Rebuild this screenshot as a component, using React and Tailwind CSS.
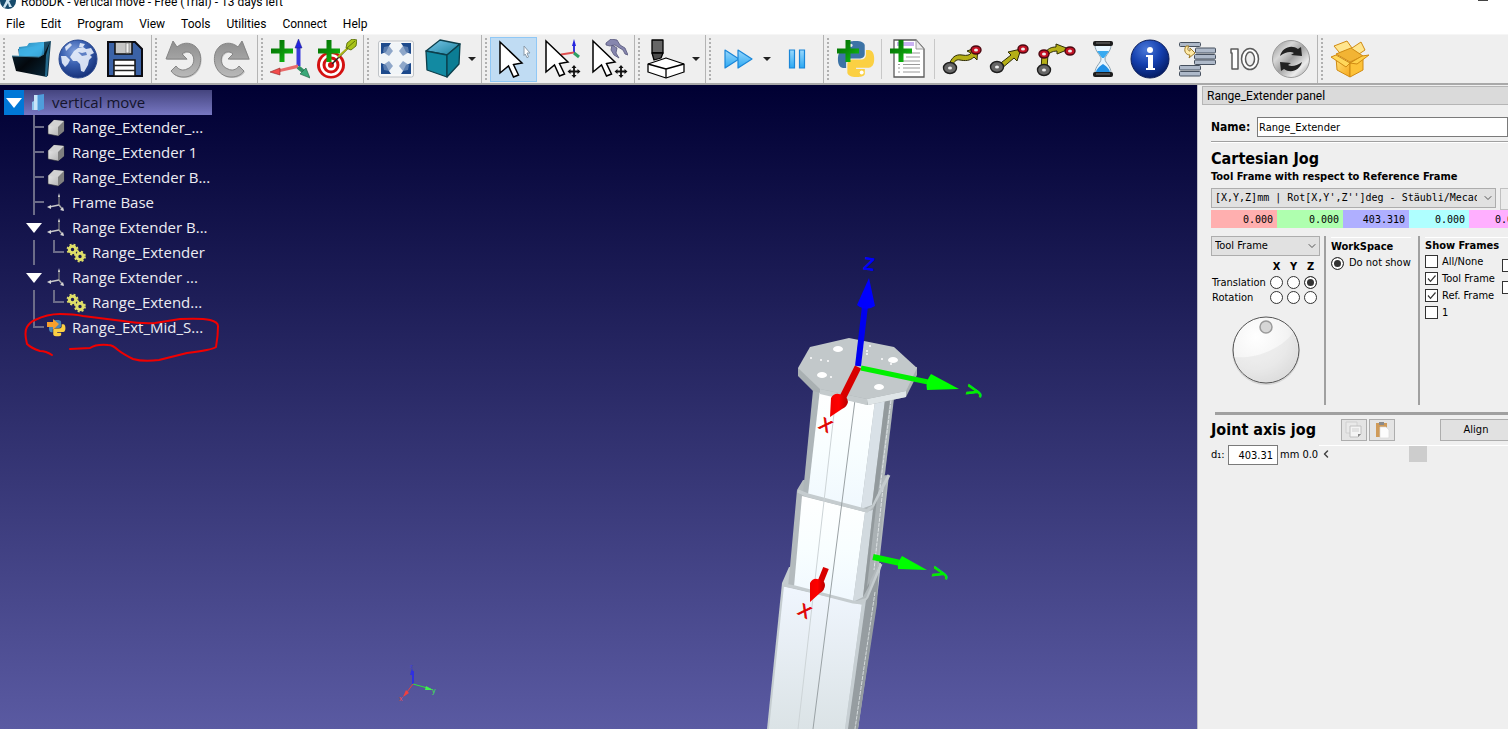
import React from "react";
import { ChevronDown, ChevronLeft } from "lucide-react";

const PY_BLUE =
  "M14.25.18l.9.2.73.26.59.3.45.32.34.34.25.34.16.33.1.3.04.26.02.2-.01.13V8.5l-.05.63-.13.55-.21.46-.26.38-.3.31-.33.25-.35.19-.35.14-.33.1-.3.07-.26.04-.21.02H8.77l-.69.05-.59.14-.5.22-.41.27-.33.32-.27.35-.2.36-.15.37-.1.35-.07.32-.04.27-.02.21v3.06H3.17l-.21-.03-.28-.07-.32-.12-.35-.18-.36-.26-.36-.36-.35-.46-.32-.59-.28-.73-.21-.88-.14-1.05-.05-1.23.06-1.22.16-1.04.24-.87.32-.71.36-.57.4-.44.42-.33.42-.24.4-.16.36-.1.32-.05.24-.01h.16l.06.01h8.16v-.83H6.18l-.01-2.75-.02-.37.05-.34.11-.31.17-.28.25-.26.31-.23.38-.2.44-.18.51-.15.58-.12.64-.1.71-.06.77-.04.84-.02 1.27.05zm-6.3 1.98l-.23.33-.08.41.08.41.23.34.33.22.41.09.41-.09.33-.22.23-.34.08-.41-.08-.41-.23-.33-.33-.22-.41-.09-.41.09z";
const PY_YELLOW =
  "M21.1 6.11l.28.06.32.12.35.18.36.27.36.35.35.47.32.59.28.73.21.88.14 1.04.05 1.23-.06 1.23-.16 1.04-.24.86-.32.71-.36.57-.4.45-.42.33-.42.24-.4.16-.36.09-.32.05-.24.02-.16-.01h-8.22v.82h5.84l.01 2.76.02.36-.05.34-.11.31-.17.29-.25.25-.31.24-.38.2-.44.17-.51.15-.58.13-.64.09-.71.07-.77.04-.84.01-1.27-.04-1.07-.14-.9-.2-.73-.25-.59-.3-.45-.33-.34-.34-.25-.34-.16-.33-.1-.3-.04-.25-.02-.2.01-.13v-5.34l.05-.64.13-.54.21-.46.26-.38.3-.32.33-.24.35-.2.35-.14.33-.1.3-.06.26-.04.21-.02.13-.01h5.84l.69-.05.59-.14.5-.21.41-.28.33-.32.27-.35.2-.36.15-.36.1-.35.07-.32.04-.28.02-.21V6.07h2.09l.14.01z";

/* ---------- toolbar drawings, all on a 40 x 40 grid ---------- */

function Icon({ children }) {
  return (
    <svg viewBox="0 0 40 40" className="size-10 shrink-0" aria-hidden="true">
      {children}
    </svg>
  );
}

function Plus({ x, y }) {
  return (
    <path
      d={`M${x + 8.5} ${y}h5v8.500h8.500v5h-8.500v8.500h-5v-8.500h-8.500v-5h8.500z`}
      fill="url(#plusGreen)"
    />
  );
}

function Defs() {
  return (
    <svg width="0" height="0" className="absolute" aria-hidden="true">
      <defs>
        <linearGradient id="plusGreen" x1="0" y1="0" x2="1" y2="1">
          <stop offset="0" stopColor="#006a00" />
          <stop offset="0.5" stopColor="#0a8f0a" />
          <stop offset="1" stopColor="#12c812" />
        </linearGradient>
        <linearGradient id="paperBlue" x1="0" y1="0" x2="1" y2="1">
          <stop offset="0" stopColor="#2b86b4" />
          <stop offset="0.6" stopColor="#43b6ea" />
          <stop offset="1" stopColor="#1a6a9a" />
        </linearGradient>
        <linearGradient id="folderFront" x1="0" y1="0" x2="1" y2="1">
          <stop offset="0" stopColor="#0b2b3c" />
          <stop offset="0.5" stopColor="#03080d" />
          <stop offset="1" stopColor="#082a3e" />
        </linearGradient>
        <linearGradient id="folderBack" x1="0" y1="0" x2="1" y2="1">
          <stop offset="0" stopColor="#2d7ca4" />
          <stop offset="1" stopColor="#0a1d2a" />
        </linearGradient>
        <radialGradient id="globe" cx="0.4" cy="0.3" r="0.75">
          <stop offset="0" stopColor="#7f9fdc" />
          <stop offset="0.45" stopColor="#3a60b0" />
          <stop offset="1" stopColor="#122c74" />
        </radialGradient>
        <radialGradient id="infoBlue" cx="0.4" cy="0.25" r="0.8">
          <stop offset="0" stopColor="#4a78d8" />
          <stop offset="0.5" stopColor="#143fae" />
          <stop offset="1" stopColor="#03185c" />
        </radialGradient>
        <linearGradient id="grayArrow" x1="0" y1="0" x2="0" y2="1">
          <stop offset="0" stopColor="#8e8e8e" />
          <stop offset="1" stopColor="#b9b9b9" />
        </linearGradient>
        <linearGradient id="skyBlue" x1="0" y1="0" x2="0" y2="1">
          <stop offset="0" stopColor="#9ad8fc" />
          <stop offset="1" stopColor="#2ba8f2" />
        </linearGradient>
        <linearGradient id="cubeTop" x1="0" y1="0" x2="1" y2="1">
          <stop offset="0" stopColor="#7cc8ea" />
          <stop offset="1" stopColor="#17819c" />
        </linearGradient>
        <linearGradient id="steel" x1="0" y1="0" x2="1" y2="1">
          <stop offset="0" stopColor="#8a8a8a" />
          <stop offset="0.3" stopColor="#d8d8d8" />
          <stop offset="0.5" stopColor="#a2a2a2" />
          <stop offset="0.75" stopColor="#ececec" />
          <stop offset="1" stopColor="#8a8a8a" />
        </linearGradient>
        <linearGradient id="boxGold" x1="0" y1="0" x2="1" y2="1">
          <stop offset="0" stopColor="#ffe27a" />
          <stop offset="1" stopColor="#f7a81b" />
        </linearGradient>
        <linearGradient id="stone" x1="0" y1="0" x2="1" y2="1">
          <stop offset="0" stopColor="#f2f2f2" />
          <stop offset="1" stopColor="#a8a8a8" />
        </linearGradient>
        <radialGradient id="dialFace" cx="0.35" cy="0.3" r="0.8">
          <stop offset="0" stopColor="#ffffff" />
          <stop offset="0.6" stopColor="#f3f3f3" />
          <stop offset="1" stopColor="#dcdcdc" />
        </radialGradient>
        <linearGradient id="whiteMetal" x1="0" y1="0" x2="0" y2="1">
          <stop offset="0" stopColor="#ffffff" />
          <stop offset="0.5" stopColor="#f8feff" />
          <stop offset="1" stopColor="#f0f8fe" />
        </linearGradient>
        <linearGradient id="baseMetal" x1="0" y1="0" x2="0" y2="1">
          <stop offset="0" stopColor="#f0f6fe" />
          <stop offset="1" stopColor="#dbe3e6" />
        </linearGradient>
        <linearGradient id="redCone" x1="0" y1="0" x2="1" y2="0">
          <stop offset="0" stopColor="#f00000" />
          <stop offset="0.5" stopColor="#ff0000" />
          <stop offset="1" stopColor="#b80000" />
        </linearGradient>
      </defs>
    </svg>
  );
}

const FolderIcon = () => (
  <Icon>
    <path d="M7 10l9-2 2-3 22-3-3 35-27-8z" fill="url(#folderBack)" />
    <path d="M8 8l8-1 2-3 15-1v15H8z" fill="url(#paperBlue)" />
    <path d="M8 10l24-4-2 13H8z" fill="#3fb0e4" opacity="0.8" />
    <path d="M1 17l27 1 5-3 6-12-3 35L5 32z" fill="url(#folderFront)" />
    <path d="M39 3l-4 13-1 21 2 1z" fill="#3189b5" opacity="0.7" />
    <path d="M1 17l27 1 5-3" fill="none" stroke="#3c7f9e" strokeWidth="1" />
  </Icon>
);

const GlobeIcon = () => (
  <Icon>
    <circle cx="20" cy="20" r="19" fill="url(#globe)" stroke="#27468e" strokeWidth="1" />
    <path
      d="M16 12l4-3 5-1 3 2 5-1 3 5-4 2 2 2-3 3-1 5-4 7-3-1-1-7-3-3-4 0-3-4zM3 17l5 0 4 4-2 4-3 3-3-4zM22 4l5 1-2 3-4 0zM7 8l5-4 2 2-6 6z"
      fill="#e8eefb"
      opacity="0.9"
    />
    <path d="M20 13l4 1 4-1 1 3-5 1z" fill="#5e7fc4" />
  </Icon>
);

const SaveIcon = () => (
  <Icon>
    <path d="M3 3h27l7 7v27H3z" fill="#3b62a6" stroke="#0b0b12" strokeWidth="2" />
    <path d="M10 3h17v12H10z" fill="#c5c5c5" stroke="#111" strokeWidth="1.5" />
    <path d="M21 4h3v10h-3z" fill="#efefef" stroke="#777" strokeWidth="0.7" />
    <path d="M9 21h21v16H9z" fill="#fff" stroke="#111" strokeWidth="1.5" />
    <path d="M9 26.500h21M9 31.500h21" stroke="#222" strokeWidth="1.5" />
  </Icon>
);

const UndoPath =
  "M9 2l4 6C21 1 33 4 36 15c3 12-5 23-16 23-6 0-10-2-13-6l5-5c3 4 7 5 11 3 6-2 8-8 6-13-2-4-7-6-11-2l5 5L2 20z";

const UndoIcon = () => (
  <Icon>
    <path d={UndoPath} fill="#c4c4c4" transform="translate(1 1)" />
    <path d={UndoPath} fill="url(#grayArrow)" stroke="#858585" strokeWidth="1" />
  </Icon>
);

const RedoIcon = () => (
  <Icon>
    <g transform="translate(40 0) scale(-1 1)">
      <path d={UndoPath} fill="#c4c4c4" transform="translate(-1 1)" />
      <path d={UndoPath} fill="url(#grayArrow)" stroke="#858585" strokeWidth="1" />
    </g>
  </Icon>
);

const Axes = () => (
  <>
    <path d="M26.500 8h4v19h-4z" fill="#3a3adc" />
    <path d="M28.500 0l3.500 9h-7z" fill="#2424e0" stroke="#1c1c80" strokeWidth="0.5" />
    <path d="M10 30l18-4.500v3.500l-18 4z" fill="#e86a6a" />
    <path d="M0 33l10-4v7z" fill="#f34b4b" stroke="#8c2222" strokeWidth="0.6" />
    <path d="M28 28l6 5" stroke="#2f8f62" strokeWidth="4" />
    <path d="M30 35l6-6 4 10z" fill="#3aa878" stroke="#1c5c40" strokeWidth="0.6" />
  </>
);

const AddFrameIcon = () => (
  <Icon>
    <Axes />
    <Plus x={1} y={1} />
  </Icon>
);

const AddTargetIcon = () => (
  <Icon>
    <ellipse cx="14" cy="26" rx="14" ry="13.500" fill="#d41111" />
    <circle cx="14" cy="26" r="11" fill="#fff" />
    <circle cx="14" cy="26" r="8.500" fill="#d41111" />
    <circle cx="14" cy="26" r="5.500" fill="#fff" />
    <circle cx="14" cy="26" r="3" fill="#d41111" />
    <path d="M15 25L33 7" stroke="#222" strokeWidth="1.5" />
    <path d="M21 18L33 7" stroke="#a9b41a" strokeWidth="2" />
    <path d="M29 9l1-5 5-4 5 1-1 6-5 4z" fill="#a9c41a" stroke="#4c6200" strokeWidth="0.8" />
    <path d="M30 9l8-7" stroke="#4c6200" strokeWidth="0.8" />
    <Plus x={1} y={1} />
  </Icon>
);

const FitIcon = () => (
  <Icon>
    <rect x="2.500" y="2" width="35" height="36" rx="2" fill="#f6f7f8" stroke="#c0c4c8" />
    <rect x="5" y="4" width="30" height="31" fill="#f1f5f8" />
    <g fill="#1d4a8c">
      <path d="M5 4h10l-2 3-3 6-5 2z" />
      <path d="M35 4H25l2 3 3 6 5 2z" />
      <path d="M5 35h10l-2-3-3-6-5-2z" />
      <path d="M35 35H25l2-3 3-6 5-2z" />
    </g>
    <g fill="#6d8dba" opacity="0.75">
      <path d="M8 8l5-1 4 5-4 5-6-4z" />
      <path d="M32 8l-5-1-4 5 4 5 6-4z" />
      <path d="M8 31l5 1 4-5-4-5-6 4z" />
      <path d="M32 31l-5 1-4-5 4-5 6 4z" />
    </g>
  </Icon>
);

const CubeIcon = () => (
  <Icon>
    <g stroke="#0c3f4c" strokeWidth="1.300" strokeLinejoin="round">
      <path d="M3 12L17 1l20 4-13 11z" fill="url(#cubeTop)" />
      <path d="M3 12l21 4v22L4 31z" fill="#128aa2" />
      <path d="M24 16L37 5l-1 20-12 13z" fill="#0b7d94" />
    </g>
  </Icon>
);

const CURSOR = "M6 3l22 21-8.500 1.500 5 10.500-5 2-5-11-8.500 7z";

const SelectIcon = () => (
  <Icon>
    <path d={CURSOR} fill="#fff" stroke="#000" strokeWidth="1.500" />
    <path d="M30 7l6 7h-3l1.500 4-1.500.8-1.800-3.800-1.200 1.500z" fill="#fff" stroke="#8a9aa8" strokeWidth="1" />
  </Icon>
);

const MoveCross = () => (
  <g stroke="#111" strokeWidth="1.800" fill="#111">
    <path d="M33 28v9M28 32.500h10" />
    <path d="M33 26l2.500 3h-5zM33 39l2.500-3h-5zM26.500 32.500l3-2.500v5zM39.500 32.500l-3-2.500v5z" stroke="none" />
  </g>
);

const MoveFrameIcon = () => (
  <Icon>
    <path d="M33 14V5" stroke="#3434d8" strokeWidth="2" />
    <path d="M33 0l2 7h-4z" fill="#2424e0" />
    <path d="M33 13.500l-13 2" stroke="#e05050" strokeWidth="2" />
    <path d="M33 14l5 4" stroke="#2f9f62" strokeWidth="3" />
    <path d={CURSOR} fill="#fff" stroke="#000" strokeWidth="1.500" transform="translate(-1 -1)" />
    <MoveCross />
  </Icon>
);

const MoveToolIcon = () => (
  <Icon>
    <g fill="#8686ae" stroke="#55557a" strokeWidth="0.8">
      <path d="M18 4l5-4 6 1 3 5 5 3 3 7-3-1-2-4-5-3-3-2-5 1-4-1z" />
      <path d="M24 6l5 3-1 5 3 5-5-3-3-5z" />
    </g>
    <path d={CURSOR} fill="#fff" stroke="#000" strokeWidth="1.500" transform="translate(-1 -1)" />
    <MoveCross />
  </Icon>
);

const MillIcon = () => (
  <Icon>
    <g stroke="#000" strokeWidth="1.300" strokeLinejoin="round">
      <path d="M1 25l18-6 18 6v8l-18 6-18-6z" fill="#fff" />
      <path d="M1 25l18 5 18-5M19 30v9" fill="none" />
      <path d="M5 1h11v13H5z" fill="#666" />
      <path d="M5 14h11l-2 5-7 2z" fill="#4c4c4c" />
    </g>
  </Icon>
);

const FastIcon = () => (
  <Icon>
    <g fill="url(#skyBlue)" stroke="#1a86d8" strokeWidth="1.200" strokeLinejoin="round">
      <path d="M7 11l14 9-14 9z" />
      <path d="M20 11l14 9-14 9z" />
    </g>
  </Icon>
);

const PauseIcon = () => (
  <Icon>
    <g fill="url(#skyBlue)" stroke="#1a86d8" strokeWidth="1.200">
      <path d="M12.500 11h5v18h-5zM22.500 11h5v18h-5z" />
    </g>
  </Icon>
);

const AddPythonIcon = () => (
  <Icon>
    <g transform="translate(2 2) scale(1.500)">
      <path d={PY_BLUE} fill="#3c73a6" />
      <path d={PY_YELLOW} fill="#fbd043" />
      <circle cx="15.800" cy="21" r="1.300" fill="#fff" />
    </g>
    <Plus x={1} y={1} />
  </Icon>
);

const AddProgramIcon = () => (
  <Icon>
    <path d="M5 1h22l8 9v28H5z" fill="#fff" stroke="#5a5a5a" strokeWidth="1.300" />
    <path d="M27 1v9h8z" fill="#ececec" stroke="#888" strokeWidth="0.8" />
    <path d="M8 3h17v4H8z" fill="#c9b2f2" />
    <path
      d="M17 14h14M17 18h14M14 22h17M14 25.500h17M14 29h17M14 33h17M9 25.500h2M9 29h2M9 33h2"
      stroke="#9a9a9a"
      strokeWidth="1.200"
    />
    <Plus x={1} y={1} />
  </Icon>
);

const Node = ({ x, y, red }) => (
  <>
    <ellipse cx={x} cy={y} rx={red ? 5 : 6.500} ry={red ? 4 : 5.500} fill={red ? "#c31224" : "#666"} stroke={red ? "#4c0710" : "#1d1d1d"} strokeWidth="1.400" />
    <ellipse cx={x} cy={y} rx="2" ry="1.500" fill="#eee" />
  </>
);

const MoveJIcon = () => (
  <Icon>
    <path d="M7 27c2-9 7-12 13-11 5 1 8 0 9-2l-4-2 11-4-1 13-3-3c-4 4-9 4-14 3-4-1-7 2-7 7z" fill="#b5af16" stroke="#2e2c05" strokeWidth="1" />
    <Node x={34} y={11} red />
    <Node x={8} y={29} />
  </Icon>
);

const MoveLIcon = () => (
  <Icon>
    <path d="M8 27l14-11-3-3 13-3-4 12-3-3-13 11z" fill="#b5af16" stroke="#2e2c05" strokeWidth="1" />
    <Node x={34} y={10} red />
    <Node x={8} y={28} />
  </Icon>
);

const MoveCIcon = () => (
  <Icon>
    <path d="M5 31l1-16h6l-1 15z" fill="#b5af16" stroke="#2e2c05" strokeWidth="1" />
    <path d="M8 16c3-7 8-8 12-8V5l13 5-12 5v-3c-5 0-8 2-10 5z" fill="#b5af16" stroke="#2e2c05" strokeWidth="1" />
    <Node x={34} y={12} red />
    <Node x={8} y={15} red />
    <Node x={8} y={31} />
  </Icon>
);

const HourglassIcon = () => (
  <Icon>
    <path d="M12 6h16c0 7-6 10-6 14s6 7 6 14H12c0-7 6-10 6-14s-6-7-6-14z" fill="#e8f6ff" stroke="#8ba0ae" strokeWidth="1" />
    <path d="M14 12h12l-5 7h-2z" fill="#38aaf0" />
    <path d="M20 25c4 3 7 5 7 9H13c0-4 3-6 7-9z" fill="#2090e6" />
    <rect x="10" y="2" width="20" height="5" rx="2" fill="#1c1c1c" />
    <rect x="10" y="33" width="20" height="5" rx="2" fill="#1c1c1c" />
    <path d="M13 4h14M13 35h14" stroke="#777" strokeWidth="1" />
  </Icon>
);

const InfoIcon = () => (
  <Icon>
    <circle cx="20" cy="20" r="19" fill="url(#infoBlue)" stroke="#0a1c58" strokeWidth="1" />
    <circle cx="20" cy="11" r="3" fill="#fff" />
    <path d="M16 16h7v13h2v2h-9v-2h2V18h-2z" fill="#fff" />
  </Icon>
);

const CallIcon = () => (
  <Icon>
    <g fill="#aeb9c9" stroke="#46505e" strokeWidth="1">
      <rect x="2.500" y="3.500" width="21" height="4" rx="1" />
      <rect x="18.500" y="9" width="20" height="5" rx="1" />
      <rect x="17.500" y="15.500" width="21" height="4.500" rx="1" />
      <rect x="17.500" y="21" width="21" height="4.500" rx="1" />
      <rect x="2.500" y="26.500" width="21" height="4.500" rx="1" />
      <rect x="2.500" y="32.500" width="21" height="4.500" rx="1" />
    </g>
    <path d="M9 7c-3 5 0 9 4 9l-1 3 6-5-5-5v3c-2 0-3-2-1-5z" fill="#ffeaa6" stroke="#9c7a28" strokeWidth="1" />
  </Icon>
);

const IoIcon = () => (
  <Icon>
    <g stroke="#5c5c5c" strokeWidth="1.500" strokeLinejoin="round">
      <path d="M7 10h7v20H8V14H7z" fill="#fff" />
      <ellipse cx="26" cy="20" rx="8.500" ry="10.500" fill="#fff" />
      <ellipse cx="26" cy="20" rx="4.500" ry="7" fill="#efefef" />
    </g>
  </Icon>
);

const SyncIcon = () => (
  <Icon>
    <circle cx="20" cy="20" r="18.500" fill="url(#steel)" stroke="#9a9a9a" strokeWidth="1" />
    <path d="M9 17c2-8 11-12 18-7l3-2 1 9-11-1 3-2c-3-2-9-1-14 3z" fill="#222" />
    <path d="M31 23c-2 8-11 12-18 7l-3 2-1-9 11 1-3 2c3 2 9 1 14-3z" fill="#222" />
  </Icon>
);

const PackageIcon = () => (
  <Icon>
    <g stroke="#d08a12" strokeWidth="1" strokeLinejoin="round">
      <path d="M4 7l13-5 5 7 9-6 4 8-12 8H14z" fill="#ffe58e" />
      <path d="M6 15l15-6 12 8-13 6z" fill="#f2b434" />
      <path d="M6 18l14 6v14L7 31z" fill="url(#boxGold)" />
      <path d="M20 24l13-6v13l-13 7z" fill="#fdc238" />
      <path d="M6 16l14 8-4 4-15-10z" fill="#ffd75a" />
      <path d="M20 24l12-7 7-1-12 9z" fill="#ffcf48" />
    </g>
  </Icon>
);

/* ---------- toolbar ---------- */

function ToolButton({ label, active, children }) {
  return (
    <button
      type="button"
      aria-label={label}
      className={
        active
          ? "flex h-[45px] w-[47px] items-center justify-center border border-[#90c8f6] bg-[#c0dcf3]"
          : "flex h-[45px] w-[47px] items-center justify-center border border-transparent"
      }
    >
      {children}
    </button>
  );
}

function Arrow({ label }) {
  return (
    <button type="button" aria-label={label} className="flex h-11 w-3 items-center justify-center">
      <svg viewBox="0 0 8 4" className="h-1 w-2">
        <path d="M0 0h8L4 4z" fill="#222" />
      </svg>
    </button>
  );
}

function Group({ first, last, children }) {
  return (
    <div
      className={
        "flex shrink-0 items-center pr-[3px] " + (last ? "" : "border-r border-[#b4b4b4]")
      }
    >
      <div className={"flex h-11 justify-center " + (first ? "w-[7px]" : "w-2")}>
        <svg viewBox="0 0 2 44" className="h-11 w-0.5" aria-hidden="true">
          <path d="M1 1v43" stroke="#b0b0b0" strokeWidth="2" strokeDasharray="2 2" />
        </svg>
      </div>
      {children}
    </div>
  );
}

const Divider = () => <div className="mx-[2px] h-10 w-0.5 border-l border-[#c8c8c8]" />;

function Toolbar() {
  return (
    <div className="flex h-[51px] shrink-0 overflow-hidden border-t border-b-2 border-t-[#f6f6f6] border-b-[#a9a9a9] bg-[#efefef]">
      <Group first>
        <ToolButton label="Open"><FolderIcon /></ToolButton>
        <ToolButton label="Online library"><GlobeIcon /></ToolButton>
        <ToolButton label="Save"><SaveIcon /></ToolButton>
      </Group>
      <Group>
        <ToolButton label="Undo"><UndoIcon /></ToolButton>
        <ToolButton label="Redo"><RedoIcon /></ToolButton>
      </Group>
      <Group>
        <ToolButton label="Add reference frame"><AddFrameIcon /></ToolButton>
        <ToolButton label="Add target"><AddTargetIcon /></ToolButton>
      </Group>
      <Group>
        <ToolButton label="Fit all"><FitIcon /></ToolButton>
        <ToolButton label="Isometric view"><CubeIcon /></ToolButton>
        <Arrow label="More views" />
      </Group>
      <Group>
        <ToolButton label="Select" active><SelectIcon /></ToolButton>
        <ToolButton label="Move reference frame"><MoveFrameIcon /></ToolButton>
        <ToolButton label="Move tool"><MoveToolIcon /></ToolButton>
      </Group>
      <Group>
        <ToolButton label="Machining"><MillIcon /></ToolButton>
        <Arrow label="More machining" />
      </Group>
      <Group>
        <ToolButton label="Fast simulation"><FastIcon /></ToolButton>
        <Arrow label="Simulation speed" />
        <ToolButton label="Pause"><PauseIcon /></ToolButton>
      </Group>
      <Group>
        <ToolButton label="Add Python program"><AddPythonIcon /></ToolButton>
        <Divider />
        <ToolButton label="Add program"><AddProgramIcon /></ToolButton>
        <Divider />
        <ToolButton label="Move joint"><MoveJIcon /></ToolButton>
        <ToolButton label="Move linear"><MoveLIcon /></ToolButton>
        <ToolButton label="Move circular"><MoveCIcon /></ToolButton>
        <ToolButton label="Pause instruction"><HourglassIcon /></ToolButton>
        <ToolButton label="Show message"><InfoIcon /></ToolButton>
        <ToolButton label="Program call"><CallIcon /></ToolButton>
        <ToolButton label="Set or wait input output"><IoIcon /></ToolButton>
        <ToolButton label="Simulation event"><SyncIcon /></ToolButton>
      </Group>
      <Group last>
        <ToolButton label="Export package"><PackageIcon /></ToolButton>
      </Group>
    </div>
  );
}

/* ---------- station tree ---------- */

const StationGlyph = () => (
  <svg viewBox="0 0 20 20" className="size-5" aria-hidden="true">
    <path d="M6 2l7 0v15l-9 0v-8l2-1z" fill="#8cc4ee" />
    <path d="M10 2l6-1v15l-6 2z" fill="#4f9ddb" />
    <path d="M6 2h3v15H6z" fill="#c8e4f8" />
  </svg>
);

const ObjectGlyph = () => (
  <svg viewBox="0 0 20 20" className="size-5" aria-hidden="true">
    <path d="M2 8l6-6 10 1v10l-6 5-10-2z" fill="url(#stone)" stroke="#2c2c34" strokeWidth="0.600" />
    <path d="M2 8l6-6 10 1-6 6z" fill="#d2d2d2" />
    <path d="M12 9l6-6v10l-6 5z" fill="#808080" />
  </svg>
);

const FrameGlyph = () => (
  <svg viewBox="0 0 20 20" className="size-5" aria-hidden="true">
    <g fill="none" strokeWidth="1.500">
      <path d="M13 2v10" stroke="#6c6c74" />
      <path d="M13 12L3 14" stroke="#c8c8c8" />
      <path d="M13 12l4 5" stroke="#a8a8a8" />
    </g>
    <path d="M1 14l4-2v4zM18 18l-4-1 3-3zM13 0l1 4h-2z" fill="#d5d5d5" />
  </svg>
);

const MechanismGlyph = () => (
  <svg viewBox="0 0 20 20" className="size-5" aria-hidden="true">
    <g fill="none" stroke="#dfdf68">
      <circle cx="6.500" cy="6.500" r="3.200" strokeWidth="3" />
      <circle cx="6.500" cy="6.500" r="5" strokeWidth="1.800" strokeDasharray="2 2" />
      <circle cx="14" cy="13.500" r="3.200" strokeWidth="3" />
      <circle cx="14" cy="13.500" r="5" strokeWidth="1.800" strokeDasharray="2 2" />
    </g>
  </svg>
);

const ScriptGlyph = () => (
  <svg viewBox="0 0 20 20" className="size-5" aria-hidden="true">
    <g transform="translate(3 2) scale(0.680)">
      <path d={PY_BLUE} fill="#4a84b4" />
      <path d={PY_YELLOW} fill="#fbd043" />
    </g>
    <path d="M1 4h6V1l6 5-6 6V9H1z" fill="#f7a02c" />
  </svg>
);

const Triangle = () => (
  <svg viewBox="0 0 16 10" className="h-[10px] w-4" aria-hidden="true">
    <path d="M0 0h16L8 10z" fill="#fff" />
  </svg>
);

/* A 20 x 25 cell of branch lines: kind is tee, elbow or bar */
function Branch({ kind }) {
  const d = {
    tee: "M10 0v25M10 12h10",
    elbow: "M10 0v12h10",
    bar: "M10 0v25",
  }[kind];
  return (
    <svg viewBox="0 0 20 25" className="h-[25px] w-5 shrink-0" aria-hidden="true">
      <path d={d} fill="none" stroke="#6c6c88" strokeWidth="2" />
    </svg>
  );
}

const ROWS = [
  { lead: ["tee"], glyph: ObjectGlyph, text: "Range_Extender_..." },
  { lead: ["tee"], glyph: ObjectGlyph, text: "Range_Extender 1" },
  { lead: ["tee"], glyph: ObjectGlyph, text: "Range_Extender B..." },
  { lead: ["tee"], glyph: FrameGlyph, text: "Frame Base" },
  { lead: ["open"], glyph: FrameGlyph, text: "Range Extender B..." },
  { lead: ["bar", "elbow"], glyph: MechanismGlyph, text: "Range_Extender" },
  { lead: ["open"], glyph: FrameGlyph, text: "Range Extender ..." },
  { lead: ["bar", "elbow"], glyph: MechanismGlyph, text: "Range_Extend..." },
  { lead: ["elbow"], glyph: ScriptGlyph, text: "Range_Ext_Mid_S..." },
];

function Tree() {
  return (
    <ul className="relative w-[212px] pt-[5px] pl-1 font-['Open_Sans','Noto_Sans',sans-serif] text-[15px] leading-[25px] text-[#ececf2]">
      <li className="flex items-center bg-linear-to-b/srgb from-[#44447e] to-[#7777c2] text-[#14142c]">
        <button type="button" aria-label="Collapse station" className="flex h-[25px] w-5 items-center justify-center bg-[#0078d7]">
          <Triangle />
        </button>
        <span className="flex w-7 justify-center pr-px"><StationGlyph /></span>
        <span>vertical move</span>
      </li>
      {ROWS.map(({ lead, glyph: Glyph, text }, i) => (
        <li key={i} className="flex h-[25px] items-center pl-5">
          {lead.map((kind, j) =>
            kind === "open" ? (
              <button key={j} type="button" aria-label={"Collapse " + text} className="flex h-[25px] w-5 items-center justify-center">
                <Triangle />
              </button>
            ) : (
              <Branch key={j} kind={kind} />
            )
          )}
          <span className="flex w-7 shrink-0 pl-0.5"><Glyph /></span>
          <span className="whitespace-nowrap">{text}</span>
        </li>
      ))}
    </ul>
  );
}

/* ---------- 3D view ---------- */

function Scene() {
  return (
    <svg
      viewBox="0 85 1197 644"
      preserveAspectRatio="xMidYMax slice"
      className="absolute inset-0 h-full w-full font-['Liberation_Sans',sans-serif]"
      role="img"
      aria-label="Three stage telescopic column"
    >
      {/* base stage */}
      <path d="M782 583l7-16 92-4-3 27-20 139h-91z" fill="#c5cdd0" />
      <path d="M784 586l78 17-17 126h-76z" fill="url(#baseMetal)" />
      <path d="M862 603l4-6-16 132h-5z" fill="#c7cfd3" />
      <path d="M866 600l13-36-2 40-19 125h-10z" fill="#969da1" />
      <path d="M875 592l-20 137" stroke="#d4dadc" strokeWidth="1" strokeDasharray="4 1" />
      <path d="M784 585l78 18 5-6 14-33" fill="none" stroke="#c5cccf" strokeWidth="3" />

      {/* middle stage */}
      <path d="M797 490l6-10 86-5-10 90-13 33-13 4-65-15 2-20z" fill="#b3babd" />
      <path d="M802 496l63 16-12 90-59-15z" fill="url(#whiteMetal)" />
      <path d="M865 512l8-2-10 87-10 5z" fill="#d2dadf" />
      <path d="M873 510l7-20-11 96-6 11z" fill="#92999c" />
      <path d="M887 480l-10 87-10 20 11-97z" fill="#aab1b4" />
      <path d="M883 488l-9 82" stroke="#dde2e4" strokeWidth="1" strokeDasharray="4 1" />
      <path d="M784 585l11 2 58 15 9 1" fill="none" stroke="#c5cccf" strokeWidth="3" />
      <path d="M798 491l8 4 61 16 6-6 16-30" fill="none" stroke="#c5cccf" strokeWidth="3" />

      {/* top stage */}
      <path d="M813 390h82l-10 84-13 32-11 3-58-16z" fill="#aeb6b9" />
      <path d="M820 389l55 12-14 108-53-14z" fill="url(#whiteMetal)" />
      <path d="M875 401l10-1-13 105-11 4z" fill="#d9e1e7" />
      <path d="M885 400l5 0-12 93-6 12z" fill="#939a9d" />
      <path d="M891 400l-11 88" stroke="#dde2e4" strokeWidth="1" strokeDasharray="4 1" />
      <path d="M798 491l10 4 53 14 6 2" fill="none" stroke="#c5cccf" strokeWidth="3" />

      {/* seams */}
      <path d="M855 400L813 729" stroke="#9aa2a5" strokeWidth="1" />
      <path d="M836 396l-38 333" stroke="#cdd4d7" strokeWidth="1" />

      {/* flange */}
      <path d="M798 368v8l15 15 55 14 38-8 11-22v-8z" fill="#a9b0b2" />
      <path d="M820 389l47 10v6l-47-11z" fill="#c5cbcd" />
      <path d="M867 399l39-8v6l-38 8z" fill="#dfe5e7" />
      <path d="M810 347l39-9 45 9 23 21-11 23-39 8-47-10-22-21z" fill="#c2c8ca" />
      <g fill="#fff">
        <ellipse cx="838" cy="349" rx="5" ry="3" />
        <ellipse cx="893" cy="360" rx="5" ry="3" />
        <ellipse cx="822" cy="375" rx="5" ry="3" />
        <ellipse cx="879" cy="387" rx="5" ry="3" />
        <circle cx="811" cy="358" r="1" />
        <circle cx="821" cy="360" r="1" />
        <circle cx="828" cy="361" r="1" />
        <circle cx="870" cy="346" r="1" />
        <circle cx="867" cy="351" r="1" />
        <circle cx="867" cy="354" r="1" />
        <circle cx="831" cy="377" r="1" />
        <circle cx="882" cy="359" r="1" />
        <circle cx="891" cy="364" r="1" />
      </g>

      {/* tool frame */}
      <path d="M858 366l7-60" stroke="#0000f0" strokeWidth="6" />
      <path d="M869 278l6 28q-9 6-18-1z" fill="#0000ff" />
      <path d="M861 368l67 14" stroke="#00f000" strokeWidth="5" />
      <path d="M959 389l-28-15q-6 8-4 16z" fill="#00ff00" />
      <path d="M858 367l-17 34" stroke="#d80000" strokeWidth="7" />
      <path d="M830 417l1-19q3-5 8-4 9 2 9 8-1 5-6 7z" fill="url(#redCone)" />
      <text x="864" y="270" fontSize="17" fill="#0000ff" stroke="#0000ff" strokeWidth="0.800" transform="rotate(8 870 264)">Z</text>
      <text x="820" y="431" fontSize="17" fill="#e00000" stroke="#e00000" strokeWidth="0.800" transform="rotate(28 826 425)">X</text>
      <text x="969" y="395" fontSize="20" fill="#00f000" stroke="#00f000" strokeWidth="0.800" transform="rotate(-75 974 391)">y</text>

      {/* reference frame */}
      <path d="M873 557l32 7" stroke="#00f000" strokeWidth="6" />
      <path d="M927 570l-25-14q-5 7-4 13z" fill="#00ff00" />
      <path d="M826 568l-8 20" stroke="#d80000" strokeWidth="6" />
      <path d="M810 602v-19q3-5 7-4 8 1 8 6 0 5-5 8z" fill="url(#redCone)" />
      <text x="799" y="617" fontSize="17" fill="#e00000" stroke="#e00000" strokeWidth="0.800" transform="rotate(28 805 611)">X</text>
      <text x="935" y="577" fontSize="20" fill="#00f000" stroke="#00f000" strokeWidth="0.800" transform="rotate(-75 940 573)">y</text>

      {/* orientation triad */}
      <path d="M413 684v-13" stroke="#3030e0" strokeWidth="2" />
      <path d="M412 668l2 7h-4z" fill="#3030e0" />
      <path d="M413 684l18 5" stroke="#30e040" strokeWidth="1" />
      <path d="M433 690l-7-4-1 4z" fill="#40f050" />
      <path d="M413 684l-9 12" stroke="#e84040" strokeWidth="1" />
      <path d="M403 697l3-7 3 3z" fill="#f04040" />
      <text x="410" y="668" fontSize="6" fill="#3c3cd8">z</text>
      <text x="432" y="693" fontSize="7" fill="#40e850">y</text>
      <text x="399" y="701" fontSize="7" fill="#f04848">x</text>
    </svg>
  );
}

function View() {
  return (
    <main className="relative min-w-0 flex-1 overflow-hidden bg-linear-to-b/srgb from-[#000033] to-[#5a5aa2]">
      <Scene />
      <Tree />
      <svg viewBox="0 85 240 280" className="pointer-events-none absolute top-0 left-0 h-[280px] w-[240px]" aria-hidden="true">
        <path
          d="M52 355q-6-4-12-4-9-3-13-7-3-12 0-17 3-5 8-7 12-6 25-6 14 0 23 2l40 5q20 3 32 2l25-4q22-1 30 1 8 2 8 6 0 10-2 21-4 3-29 6l-28 7q-16 2-26-1-10-5-15-9-5-5-10-5-12-1-18 3l-20 1"
          fill="none"
          stroke="#f00000"
          strokeWidth="2"
          strokeLinecap="round"
          strokeLinejoin="round"
        />
      </svg>
    </main>
  );
}

/* ---------- side panel ---------- */

function Combo({ id, label, options, className }) {
  return (
    <div className={"relative " + className}>
      <select
        id={id}
        aria-label={label}
        className="block h-5 w-full appearance-none overflow-hidden border border-[#adadad] bg-[#e1e1e1] pr-[18px] pl-[3px] text-black"
      >
        {options.map((o) => (
          <option key={o}>{o}</option>
        ))}
      </select>
      <ChevronDown className="pointer-events-none absolute top-1 right-0.5 size-3 text-[#555]" strokeWidth={2} />
    </div>
  );
}

function Radio({ label, name, checked }) {
  return (
    <input
      type="radio"
      aria-label={label}
      name={name}
      defaultChecked={checked}
      className="size-[13px] shrink-0 appearance-none rounded-full border border-[#333] bg-white checked:bg-[#333] checked:shadow-[inset_0_0_0_2px_#fff]"
    />
  );
}

function Check({ id, label, checked }) {
  return (
    <div className="flex h-[17px] items-center gap-1">
      <span className="relative flex size-[13px] shrink-0">
        <input
          id={id}
          type="checkbox"
          aria-label={label || "Extra frame"}
          defaultChecked={checked}
          className="peer size-[13px] appearance-none border border-[#333] bg-white"
        />
        <svg viewBox="0 0 13 13" className="pointer-events-none absolute inset-0 hidden size-[13px] peer-checked:block" aria-hidden="true">
          <path d="M3 6.500l2.500 2.800L10.500 3.500" fill="none" stroke="#333" strokeWidth="1.200" />
        </svg>
      </span>
      {label && <label htmlFor={id} className="whitespace-nowrap">{label}</label>}
    </div>
  );
}

const POSE = [
  { id: "x", value: "0.000", style: "w-[66px] bg-[#ffafaf]" },
  { id: "y", value: "0.000", style: "w-[66px] bg-[#afffaf]" },
  { id: "z", value: "403.310", style: "w-[66px] bg-[#afafff]" },
  { id: "rx", value: "0.000", style: "w-[60px] bg-[#afffff]" },
  { id: "ry", value: "0.000", style: "w-[60px] bg-[#ffafff]" },
];

function JogGrid() {
  return (
    <div className="mt-[3px] grid grid-cols-[57px_17px_17px_17px] items-center justify-items-center text-center">
      <span />
      <b className="h-4 text-[11px] leading-4">X</b>
      <b className="h-4 text-[11px] leading-4">Y</b>
      <b className="h-4 text-[11px] leading-4">Z</b>
      <span className="h-[15px] justify-self-start pl-px leading-[15px]">Translation</span>
      <Radio name="jog" label="Translation X" />
      <Radio name="jog" label="Translation Y" />
      <Radio name="jog" label="Translation Z" checked />
      <span className="h-[15px] justify-self-start pl-px leading-[15px]">Rotation</span>
      <Radio name="jog" label="Rotation X" />
      <Radio name="jog" label="Rotation Y" />
      <Radio name="jog" label="Rotation Z" />
    </div>
  );
}

function Panel() {
  return (
    <aside className="w-[311px] shrink-0 overflow-hidden border-l border-[#c0c0c8] bg-[#efefef] pl-1 font-['DejaVu_Sans_Condensed','DejaVu_Sans',sans-serif] text-[11px] leading-4 text-black">
      <h2 className="mt-px h-[19px] w-[320px] border border-[#b5b5b5] bg-[#dadada] pl-1 font-['Roboto',sans-serif] text-[12px] leading-[18px]">
        Range_Extender panel
      </h2>
      <div className="w-[340px] pt-3 pl-[9px]">
        <div className="flex items-center">
          <label htmlFor="name" className="w-[46px] text-[12px] font-bold">Name:</label>
          <input id="name" defaultValue="Range_Extender" className="h-5 w-[251px] border border-[#7a7a7a] bg-white px-px" />
        </div>
        <hr className="mt-1 h-0.5 border-0 border-t border-b border-t-[#a0a0a0] border-b-white" />
        <h3 className="mt-1.5 text-[16px] leading-5 font-bold">Cartesian Jog</h3>
        <p className="text-[11px] font-bold">Tool Frame with respect to Reference Frame</p>
        <div className="mt-[3px] flex gap-1">
          <Combo
            id="pose"
            label="Pose format"
            options={["[X,Y,Z]mm | Rot[X,Y',Z'']deg - Stäubli/Mecademic"]}
            className="w-[285px] font-['DejaVu_Sans_Mono',monospace] text-[10px]"
          />
          <button type="button" aria-label="Copy pose" className="h-[22px] w-6 border border-[#c0c0c0] bg-[#ececec]" />
        </div>
        <div className="flex font-['DejaVu_Sans_Mono',monospace] text-[10px]">
          {POSE.map((p) => (
            <input
              key={p.id}
              aria-label={"Pose " + p.id}
              defaultValue={p.value}
              className={"h-[18px] shrink-0 pr-1 text-right " + p.style}
            />
          ))}
        </div>

        <div className="mt-2 flex h-[169px]">
          <section className="w-[113px]">
            <Combo id="frame" label="Jog frame" options={["Tool Frame"]} className="w-[109px]" />
            <JogGrid />
            <svg viewBox="0 0 70 70" className="mt-2.5 ml-5 size-[70px]" role="img" aria-label="Jog dial">
              <circle cx="35" cy="36" r="34" fill="#d6d6d6" />
              <circle cx="35" cy="35" r="33" fill="url(#dialFace)" stroke="#555" strokeWidth="1" />
              <path d="M3 42C22 44 48 36 62 18 72 34 67 67 35 67 18 67 6 56 3 42z" fill="#d4d4d4" opacity="0.3" />
              <circle cx="35" cy="12" r="6" fill="#d6d6d6" stroke="#9a9a9a" strokeWidth="1.500" />
            </svg>
          </section>
          <section className="w-[94px] border-l-2 border-[#a0a0a0] pl-[5px]">
            <div className="h-0.5 w-20 border-b border-white" />
            <h4 className="mt-px text-[11px] font-bold">WorkSpace</h4>
            <label className="flex items-center gap-[5px] whitespace-nowrap">
              <Radio name="workspace" label="Do not show" checked />
              Do not show
            </label>
          </section>
          <section className="flex-1 border-l-2 border-[#a0a0a0] pl-[5px]">
            <div className="h-0.5 border-b border-white" />
            <h4 className="text-[11px] leading-[15px] font-bold">Show Frames</h4>
            <div className="flex">
              <div className="w-[77px]">
                <Check id="all" label="All/None" />
                <Check id="tool" label="Tool Frame" checked />
                <Check id="ref" label="Ref. Frame" checked />
                <Check id="one" label="1" />
              </div>
              <div className="flex flex-col gap-[5px] pt-1">
                <Check id="extra1" />
                <Check id="extra2" />
              </div>
            </div>
          </section>
        </div>

        <hr className="mt-[7px] ml-1 h-[3px] border-0 bg-[#a0a0a0]" />
        <div className="mt-1 flex items-center">
          <h3 className="w-[130px] text-[16px] leading-5 font-bold">Joint axis jog</h3>
          <button type="button" aria-label="Copy joints" className="mr-0.5 flex h-[22px] w-[26px] items-center justify-center border border-[#adadad] bg-[#e4e4e4]">
            <svg viewBox="0 0 18 18" className="size-[18px]">
              <path d="M1 1h11v11H1z" fill="#e9e9e9" stroke="#d0d0d0" />
              <path d="M5 5h11v8l-3 3H5z" fill="#f4f4f4" stroke="#c0c0c0" />
              <path d="M7 8h7M7 10h7" stroke="#d0d0d0" />
              <path d="M13 16v-3h3z" fill="#888" />
            </svg>
          </button>
          <button type="button" aria-label="Paste joints" className="flex h-[22px] w-[26px] items-center justify-center border border-[#adadad] bg-[#e4e4e4]">
            <svg viewBox="0 0 18 18" className="size-[18px]">
              <path d="M3 2h11v14H3z" fill="#cf9a58" />
              <path d="M6 1h5v3H6z" fill="#8a8a8a" />
              <path d="M7 6h6l3 3v8H7z" fill="#fcfcfc" stroke="#d8d8d8" strokeWidth="0.700" />
            </svg>
          </button>
          <button type="button" className="ml-[45px] h-[22px] w-[72px] border border-[#adadad] bg-[#e1e1e1]">Align</button>
        </div>
        <div className="mt-1 flex items-start">
          <label htmlFor="d1" className="w-[17px] leading-5">d₁:</label>
          <input id="d1" defaultValue="403.31" className="h-5 w-[50px] border border-[#7a7a7a] bg-white pr-1 text-right" />
          <span className="w-[41px] pl-0.5 leading-5 whitespace-nowrap">mm 0.0</span>
          <div className="flex h-[17px] flex-1 items-center border-t border-white">
            <button type="button" aria-label="Decrease" className="flex h-4 w-[90px] items-center pl-px">
              <ChevronLeft className="size-3 text-[#444]" strokeWidth={3} />
            </button>
            <div className="h-4 w-[18px] bg-[#cdcdcd]" role="slider" aria-label="Joint 1" aria-valuenow={403} />
          </div>
        </div>
      </div>
    </aside>
  );
}

/* ---------- window ---------- */

const MENUS = ["File", "Edit", "Program", "View", "Tools", "Utilities", "Connect", "Help"];

export default function App() {
  return (
    <div className="flex h-screen flex-col overflow-hidden bg-white font-['Roboto',sans-serif] text-[12px] text-black">
      <Defs />
      <header className="flex h-[10px] shrink-0 items-end justify-between overflow-hidden">
        <div className="flex items-end gap-[5px]">
          <svg viewBox="0 0 16 16" className="size-4" aria-hidden="true">
            <circle cx="8" cy="7" r="8" fill="#174a6b" />
            <path d="M7 3l3-1 1 4-2 1 3 6H9L8 9l-3 5-2-1 3-6z" fill="#cfe4f0" />
          </svg>
          <h1 className="leading-4 whitespace-nowrap">RoboDK - vertical move - Free (Trial) - 13 days left</h1>
        </div>
        <button type="button" aria-label="Minimize" className="mr-5 h-px w-2.5 self-start bg-[#444]" />
      </header>
      <nav className="flex h-6 shrink-0 items-center gap-4 pt-1 pl-1.5 leading-4">
        {MENUS.map((m) => (
          <button key={m} type="button">{m}</button>
        ))}
      </nav>
      <Toolbar />
      <div className="flex min-h-0 flex-1">
        <View />
        <Panel />
      </div>
    </div>
  );
}
